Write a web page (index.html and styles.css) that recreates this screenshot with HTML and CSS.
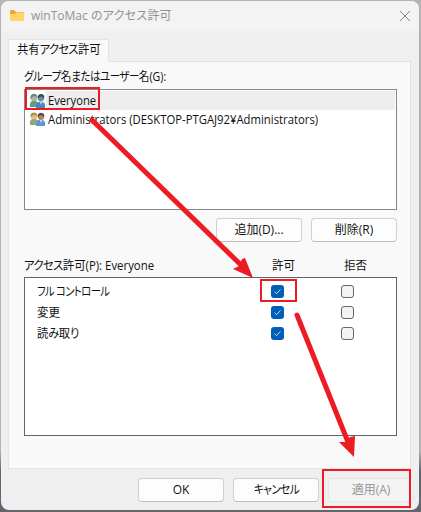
FILE: index.html
```html
<!DOCTYPE html>
<html lang="ja">
<head>
<meta charset="utf-8">
<title>winToMac のアクセス許可</title>
<link rel="stylesheet" href="styles.css">
</head>
<body>
<main class="dialog">
  <header class="titlebar">
    <svg class="folder" width="16" height="14" viewBox="0 0 16 14"><path d="M1 4V2q0-1 1-1h3l2 2h7q1 0 1 1v2H1z" fill="#e8a92f"/><path d="M1 5h5l1.500-1.500H14q1 0 1 1V11q0 1-1 1H2q-1 0-1-1z" fill="#ffd568"/></svg>
    <span class="t-title">winToMac <span class="k">のアクセス</span>許可</span>
    <svg class="close" width="12" height="12" viewBox="0 0 12 12"><path d="M1 1l10 10M11 1L1 11" stroke="#858585" stroke-width="1"/></svg>
  </header>
  <div class="tab"><span class="fit t-tab">共有<span class="k">アクセス</span>許可</span></div>
  <section class="panel">
    <div class="label"><span class="fit t-group"><span class="k">グループ</span>名<span class="k">またはユーザー</span>名(G):</span></div>
    <div class="users">
      <div class="user selected">
        <svg class="people" width="18" height="16" viewBox="0 0 18 16"><path d="M1 14v-3q0-3 4-3.500 4 .5 4 3.500v3z" fill="#5f9c82"/><circle cx="5" cy="4.700" r="3.500" fill="#a9b9a0"/><path d="M1.500 6Q1 1 4.500.7 8 .5 8.500 4L5 3z" fill="#728779"/><path d="M7 15v-3q0-3 4.500-3.500Q16 9 16 12v3z" fill="#4389c4"/><circle cx="12" cy="5" r="3.200" fill="#6f8da0"/><path d="M8.700 5.500Q8.300 1 12 .9q4 .1 3.200 4.600L12 3.500z" fill="#31506c"/><path d="M11 9l1 3 1-3z" fill="#d6e7ee"/></svg>
        <span class="fit t-user">Everyone</span>
      </div>
      <div class="user">
        <svg class="people" width="18" height="16" viewBox="0 0 18 16"><path d="M1 13v-3q0-3 4-3.500Q9 7 9 10v3z" fill="#8fa777"/><circle cx="5" cy="4.200" r="3.300" fill="#e2bd87"/><path d="M1.500 5Q1 .7 4.500.4 8 .2 8.500 3.700L5 2.700z" fill="#b08d4e"/><path d="M7 14v-3q0-3 4.500-3.500Q16 8 16 11v3z" fill="#5c98cc"/><circle cx="12" cy="4.700" r="3.200" fill="#b48762"/><path d="M8.700 5Q8.300 1 12 .7q4 .3 3.200 4.300L12 3z" fill="#594a46"/><path d="M11 8l1 3 1-3z" fill="#e1edf2"/></svg>
        <span class="fit t-admin">Administrators (DESKTOP-PTGAJ92¥Administrators)</span>
      </div>
    </div>
    <div class="actions"><button>追加(D)...</button><button>削除(R)</button></div>
    <div class="columns"><span class="fit t-perm"><span class="k">アクセス</span>許可(P): Everyone</span><span class="fit t-col">許可</span><span class="fit t-col">拒否</span></div>
    <div class="permissions">
      <div class="permission"><span class="fit t-full k">フル コントロール</span><i class="check on"><svg width="13" height="13" viewBox="0 0 13 13"><path d="M3.500 6.700l2 2 4-4.200"/></svg></i><i class="check"></i></div>
      <div class="permission"><span class="fit t-col">変更</span><i class="check on"><svg width="13" height="13" viewBox="0 0 13 13"><path d="M3.500 6.700l2 2 4-4.200"/></svg></i><i class="check"></i></div>
      <div class="permission"><span class="fit t-read">読<span class="k">み</span>取<span class="k">り</span></span><i class="check on"><svg width="13" height="13" viewBox="0 0 13 13"><path d="M3.500 6.700l2 2 4-4.200"/></svg></i><i class="check"></i></div>
    </div>
  </section>
  <footer class="footer"><button>OK</button><button><span class="fit t-cancel k">キャンセル</span></button><button class="disabled">適用(A)</button></footer>
</main>
<svg class="notes" width="421" height="512" viewBox="0 0 421 512">
  <g fill="none" stroke="#ed1c24" stroke-width="2">
    <path d="M26 88h73v21H26zM261 280h35v21h-35zM323 470h87v37h-87z"/>
    <path d="M92 120l150 146M297 315l51 127" stroke-width="5" stroke-linecap="round"/>
  </g>
  <path d="M253 278l-20-9 6-3 3-7 3-1zM354 457l-15-15 7 0 4-5 5-1z" fill="#ed1c24"/>
</svg>
</body>
</html>
```
FILE: styles.css
```css
* { box-sizing: border-box; }
body {
  margin: 0;
  width: 421px;
  height: 512px;
  padding: 1px 2px 2px 1px;
  overflow: hidden;
  background: linear-gradient(#b4b4b4 0 88%, #62666c 92%);
  color: #111;
  font: 12px/16px "Open Sans", "Noto Sans CJK JP", sans-serif;
}
span { white-space: nowrap; }
.k { font-feature-settings: "palt"; letter-spacing: -.7px; }
.fit { display: inline-block; justify-self: start; transform-origin: 0 50%; }
.t-title .k { letter-spacing: .3px; }
.t-tab { transform: scaleX(.94); }
.t-group { transform: scaleX(.885); }
.t-user { transform: scaleX(.93); }
.t-admin { transform: scaleX(.942); }
.t-perm { transform: scaleX(.95); }
.t-col { transform: scaleX(.96); }
.t-full { transform: scaleX(.86); }
.t-read { transform: scaleX(.94); }
.t-cancel { transform: scaleX(.89); transform-origin: center; }
.dialog { width: 418px; height: 509px; border-radius: 8px; background: #efefef; overflow: hidden; }
.titlebar { height: 30px; background: #f3f3f3; color: #929292; display: flex; align-items: center; padding: 0 8px; }
.folder { margin-right: 6px; }
.close { margin-left: auto; }
.tab { width: 101px; height: 23px; margin: 8px 0 -1px 7px; background: #f9f9f9; border: 1px solid #e3e3e3; border-bottom: 0; padding: 2px 0 0 8px; position: relative; }
.panel { width: 403px; height: 408px; margin-left: 7px; border: 1px solid #e3e3e3; background: #f9f9f9; padding: 7px 13px 0 15px; }
.label { height: 20px; }
.users { height: 121px; width: 373px; border: 1px solid #828790; background: #fff; padding: 1px; }
.user { height: 19px; display: flex; align-items: center; padding-left: 3px; }
.selected { background: linear-gradient(90deg, #fff 20px, #eee 20px); }
.people { margin-right: 1px; }
.actions { display: flex; justify-content: flex-end; gap: 9px; padding-top: 8px; width: 373px; height: 48px; }
button { width: 86px; height: 24px; border: 1px solid #d0d0d0; border-bottom-color: #bcbcbc; border-radius: 4px; background: #fdfdfd; color: #111; font: inherit; padding: 0; }
.columns { display: grid; grid-template-columns: 248px 72px auto; height: 19px; }
.permissions { width: 373px; height: 159px; border: 1px solid #646464; background: #fff; padding: 3px 0 0 12px; }
.permission { display: grid; grid-template-columns: 234px 70px 13px; align-items: center; height: 21px; }
.check { width: 13px; height: 13px; border: 1px solid #666; border-radius: 3px; background: #f3f3f3; }
.on { border: 0; background: #005fb8; }
.check svg { display: block; fill: none; stroke: #c5dcf0; }
.footer { display: flex; gap: 9px; margin: 9px 0 0 137px; }
.disabled { background: #f4f4f4; border-color: #e4e4e4; color: #969696; }
.notes { position: absolute; left: 0; top: 0; }
```
